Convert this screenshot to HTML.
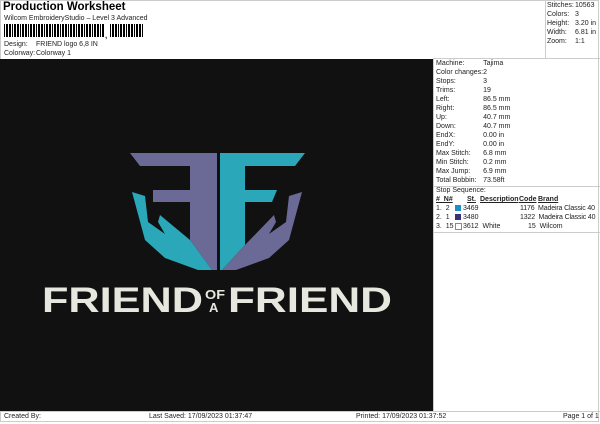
<!DOCTYPE html><html><head><style>
body{margin:0;width:600px;height:424px;background:#fff;font-family:"Liberation Sans",sans-serif;font-size:7px;color:#222;position:relative;overflow:hidden}
.a{position:absolute;white-space:nowrap}
.bc{position:absolute;left:4px;top:24px;height:13px;width:100px;background:repeating-linear-gradient(90deg,#000 0 1px,#fff 1px 2px,#000 2px 4px,#fff 4px 5px,#000 5px 7px,#fff 7px 8px)}
table{border-collapse:collapse;font-size:7px}
td{padding:0;height:9px;white-space:nowrap}
</style></head><body>
<div class="a" style="left:3px;top:1px;font-size:11.5px;font-weight:bold;color:#000">Production Worksheet</div>
<div class="a" style="left:4px;top:15px">Wilcom EmbroideryStudio – Level 3 Advanced</div>
<div class="bc"></div>
<div class="a" style="left:105px;top:31px;font-weight:bold;font-size:8px">,</div>
<div class="bc" style="left:110px;width:34px"></div>
<div class="a" style="left:4px;top:41px">Design:</div><div class="a" style="left:36px;top:41px">FRIEND logo 6,8 IN</div>
<div class="a" style="left:4px;top:50px">Colorway:</div><div class="a" style="left:36px;top:50px">Colorway 1</div>
<div class="a" style="left:0;top:0;width:599px;height:422px;border:1px solid #ccc;box-sizing:border-box"></div>
<div class="a" style="left:545px;top:0;width:1px;height:58px;background:#ccc"></div>
<div class="a" style="left:433px;top:58px;width:167px;height:1px;background:#ccc"></div>
<table class="a" style="left:547px;top:1px"><tr><td style="width:28px">Stitches:</td><td>10563</td></tr><tr><td>Colors:</td><td>3</td></tr><tr><td>Height:</td><td>3.20 in</td></tr><tr><td>Width:</td><td>6.81 in</td></tr><tr><td>Zoom:</td><td>1:1</td></tr></table>
<div class="a" style="left:0;top:59px;width:433px;height:352px;background:#111"></div>
<svg class="a" style="left:0;top:59px" width="433" height="352" viewBox="0 59 433 352">
<polygon points="130,153 217,153 217,270 212,270 190,240 190,202 153,202 153,190 190,190 190,166 140,166" fill="#6b6a96"/>
<polygon points="220,153 305,153 295,166 245,166 245,190 277,190 272,202 245,202 245,245 222,270 220,270" fill="#2aa7b8"/>
<polygon points="132,192 145,196 148,222 165,234 158,222 160,215 190,240 212,270 198,270 165,258 145,240" fill="#2aa7b8"/>
<polygon points="302,192 289,196 286,222 269,234 276,222 274,215 245,245 222,270 236,270 269,258 289,240" fill="#6b6a96"/>
<g fill="#e6e8e0" font-family="Liberation Sans,sans-serif" font-weight="bold">
<text x="42" y="312" font-size="35" textLength="161" lengthAdjust="spacingAndGlyphs">FRIEND</text>
<text x="205" y="299" font-size="13" textLength="20" lengthAdjust="spacingAndGlyphs">OF</text>
<text x="209" y="312" font-size="13">A</text>
<text x="228" y="312" font-size="35" textLength="164" lengthAdjust="spacingAndGlyphs">FRIEND</text>
</g></svg>
<div class="a" style="left:433px;top:59px;width:1px;height:352px;background:#ccc"></div>
<table class="a" style="left:436px;top:59px"><tr><td style="width:47px">Machine:</td><td>Tajima</td></tr><tr><td>Color changes:</td><td>2</td></tr><tr><td>Stops:</td><td>3</td></tr><tr><td>Trims:</td><td>19</td></tr><tr><td>Left:</td><td>86.5 mm</td></tr><tr><td>Right:</td><td>86.5 mm</td></tr><tr><td>Up:</td><td>40.7 mm</td></tr><tr><td>Down:</td><td>40.7 mm</td></tr><tr><td>EndX:</td><td>0.00 in</td></tr><tr><td>EndY:</td><td>0.00 in</td></tr><tr><td>Max Stitch:</td><td>6.8 mm</td></tr><tr><td>Min Stitch:</td><td>0.2 mm</td></tr><tr><td>Max Jump:</td><td>6.9 mm</td></tr><tr><td>Total Bobbin:</td><td>73.58ft</td></tr></table>
<div class="a" style="left:433px;top:186px;width:167px;height:1px;background:#ccc"></div>
<div class="a" style="left:436px;top:187px">Stop Sequence:</div>
<div class="a" style="left:436px;top:196px;font-weight:bold;text-decoration:underline">#&nbsp; N#</div>
<div class="a" style="left:467px;top:196px;font-weight:bold;text-decoration:underline">St.</div>
<div class="a" style="left:480px;top:196px;font-weight:bold;text-decoration:underline">Description</div>
<div class="a" style="left:519px;top:196px;font-weight:bold;text-decoration:underline">Code</div>
<div class="a" style="left:538px;top:196px;font-weight:bold;text-decoration:underline">Brand</div>
<div class="a" style="left:436px;top:205px">1.&nbsp; 2</div><div class="a" style="left:455px;top:205px;width:6px;height:6px;background:#1a8fc8"></div><div class="a" style="left:463px;top:205px">3469</div><div class="a" style="left:520px;top:205px;letter-spacing:-0.15px">1176&nbsp; Madeira Classic 40</div>
<div class="a" style="left:436px;top:214px">2.&nbsp; 1</div><div class="a" style="left:455px;top:214px;width:6px;height:6px;background:#3a3080"></div><div class="a" style="left:463px;top:214px">3480</div><div class="a" style="left:520px;top:214px;letter-spacing:-0.15px">1322&nbsp; Madeira Classic 40</div>
<div class="a" style="left:436px;top:223px">3.&nbsp; 15</div><div class="a" style="left:455px;top:223px;width:5px;height:5px;border:1px solid #888"></div><div class="a" style="left:463px;top:223px">3612&nbsp; White</div><div class="a" style="left:528px;top:223px">15&nbsp; Wilcom</div>
<div class="a" style="left:433px;top:232px;width:167px;height:1px;background:#ccc"></div>
<div class="a" style="left:0;top:411px;width:600px;height:1px;background:#ccc"></div>
<div class="a" style="left:4px;top:413px">Created By:</div>
<div class="a" style="left:149px;top:413px">Last Saved: 17/09/2023 01:37:47</div>
<div class="a" style="left:356px;top:413px">Printed: 17/09/2023 01:37:52</div>
<div class="a" style="left:563px;top:413px">Page 1 of 1</div>
</body></html>
